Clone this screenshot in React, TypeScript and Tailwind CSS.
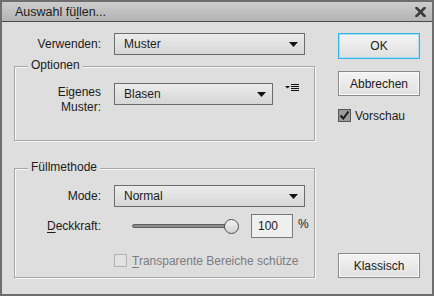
import React from "react";

const font = "font-['Liberation_Sans',Arial,sans-serif]";

function Arrow() {
  return (
    <svg width="9" height="5" viewBox="0 0 9 5" className="shrink-0">
      <path d="M0 0H9L4.5 5Z" fill="#111" />
    </svg>
  );
}

function Select({ value, width }: { value: string; width: string }) {
  return (
    <div
      className={`${width} h-[22px] flex items-center justify-between pl-[9px] pr-[6px] border border-[#6c6c6c] bg-gradient-to-b from-[#ececec] to-[#d6d6d6] text-[#1b1b1b]`}
    >
      <span>{value}</span>
      <Arrow />
    </div>
  );
}

function Button({
  children,
  primary,
  className = "",
}: {
  children: React.ReactNode;
  primary?: boolean;
  className?: string;
}) {
  return (
    <div
      className={`w-[82px] flex items-center justify-center bg-gradient-to-b from-[#f4f4f4] to-[#e0e0e0] text-[#1b1b1b] ${
        primary
          ? "h-[26px] border border-[#2fb5e6] shadow-[inset_0_0_0_1px_#a9def2]"
          : "h-[25px] border border-[#8a8a8a] shadow-[inset_0_0_0_1px_#fafafa]"
      } ${className}`}
    >
      {children}
    </div>
  );
}

function Group({
  title,
  className,
  children,
}: {
  title: string;
  className: string;
  children: React.ReactNode;
}) {
  return (
    <div
      className={`relative w-[301px] border border-[#a6a6a6] shadow-[inset_1px_1px_0_#f8f8f8,1px_1px_0_#f8f8f8] ${className}`}
    >
      <span className="absolute left-[13px] -top-[9px] px-[3px] leading-[14px] bg-[#dedede] text-[#1b1b1b]">
        {title}
      </span>
      {children}
    </div>
  );
}

export default function App() {
  return (
    <div
      className={`w-[434px] h-[296px] flex flex-col border-2 border-[#6e6e6e] bg-[#dedede] text-[12px] leading-[14px] ${font}`}
    >
      {/* Title bar */}
      <div className="h-[20px] shrink-0 flex items-center justify-between pl-[13px] pr-[6px] bg-gradient-to-b from-[#cdcdcd] to-[#b4b4b4] border-b border-[#4a4a4a]">
        <span className="text-[12.5px] text-[#1b1b1b]">
          Auswahl fü<span className="underline underline-offset-2">l</span>len...
        </span>
        <svg width="11" height="10" viewBox="0 0 11 10">
          <path
            d="M1.5 1L9.5 9M9.5 1L1.5 9"
            stroke="#3a3a3a"
            strokeWidth="2.6"
            strokeLinecap="square"
          />
        </svg>
      </div>

      {/* Body */}
      <div className="flex-1 flex pl-[12px] pb-[16px]">
        {/* Left column */}
        <div className="flex flex-col w-[302px]">
          <div className="mt-[11px] h-[22px] flex items-center">
            <span className="w-[87px] text-right text-[#1b1b1b]">Verwenden:</span>
            <div className="ml-[13px]">
              <Select value="Muster" width="w-[191px]" />
            </div>
          </div>

          <Group title="Optionen" className="mt-[11px] h-[75px]">
            <div className="flex items-start pt-[16px]">
              <span className="w-[86px] mt-[2px] leading-[15px] text-right text-[#1b1b1b]">
                Eigenes
                <br />
                Muster:
              </span>
              <div className="ml-[13px]">
                <Select value="Blasen" width="w-[159px]" />
              </div>
              <svg width="14" height="8" viewBox="0 0 14 8" className="ml-[12px] mt-[1px]">
                <path d="M0 2H5L2.5 4.5Z" fill="#111" />
                <path d="M6 0.5H14M6 2.5H14M6 4.5H14M6 6.5H14" stroke="#111" strokeWidth="1" />
              </svg>
            </div>
          </Group>

          <Group title="Füllmethode" className="mt-[27px] h-[110px]">
            <div className="flex flex-col pt-[16px]">
              <div className="h-[22px] flex items-center">
                <span className="w-[86px] text-right text-[#1b1b1b]">Mode:</span>
                <div className="ml-[13px]">
                  <Select value="Normal" width="w-[191px]" />
                </div>
              </div>

              <div className="mt-[7px] h-[24px] flex items-center">
                <span className="w-[86px] text-right text-[#1b1b1b]">
                  <span className="underline underline-offset-2">D</span>eckkraft:
                </span>
                <div className="ml-[31px] w-[107px] flex items-center">
                  <div className="w-[97px] h-[4px] rounded-full bg-[#8e8e8e] border border-[#5e5e5e]" />
                  <div className="-ml-[5px] w-[15px] h-[15px] rounded-full border border-[#505050] bg-gradient-to-b from-[#f2f2f2] to-[#d2d2d2]" />
                </div>
                <div className="ml-[12px] w-[42px] h-[24px] flex items-center pl-[6px] border border-[#7a7a7a] bg-[#efefef] text-[#1b1b1b]">
                  100
                </div>
                <span className="ml-[5px] self-start mt-[3px] text-[#1b1b1b]">%</span>
              </div>

              <div className="mt-[16px] h-[13px] flex items-center">
                <div className="ml-[99px] w-[13px] h-[13px] border border-[#b2b2b2] bg-[#e2e2e2]" />
                <span className="ml-[5px] text-[#7c7c7c]">
                  <span className="underline underline-offset-2">T</span>ransparente Bereiche schütze
                </span>
              </div>
            </div>
          </Group>
        </div>

        {/* Right column */}
        <div className="ml-[22px] flex flex-col">
          <Button primary className="mt-[11px]">
            OK
          </Button>
          <Button className="mt-[12px]">Abbrechen</Button>
          <div className="mt-[13px] h-[13px] flex items-center">
            <div className="w-[13px] h-[13px] flex items-center justify-center border border-[#555] bg-[#9a9a9a]">
              <svg width="11" height="11" viewBox="0 0 11 11">
                <path d="M1.5 5.5L4.3 8.5L9.5 1.5" fill="none" stroke="#1a1a1a" strokeWidth="2" />
              </svg>
            </div>
            <span className="ml-[4px] text-[#1b1b1b]">Vorschau</span>
          </div>
          <Button className="mt-auto">Klassisch</Button>
        </div>
      </div>
    </div>
  );
}
